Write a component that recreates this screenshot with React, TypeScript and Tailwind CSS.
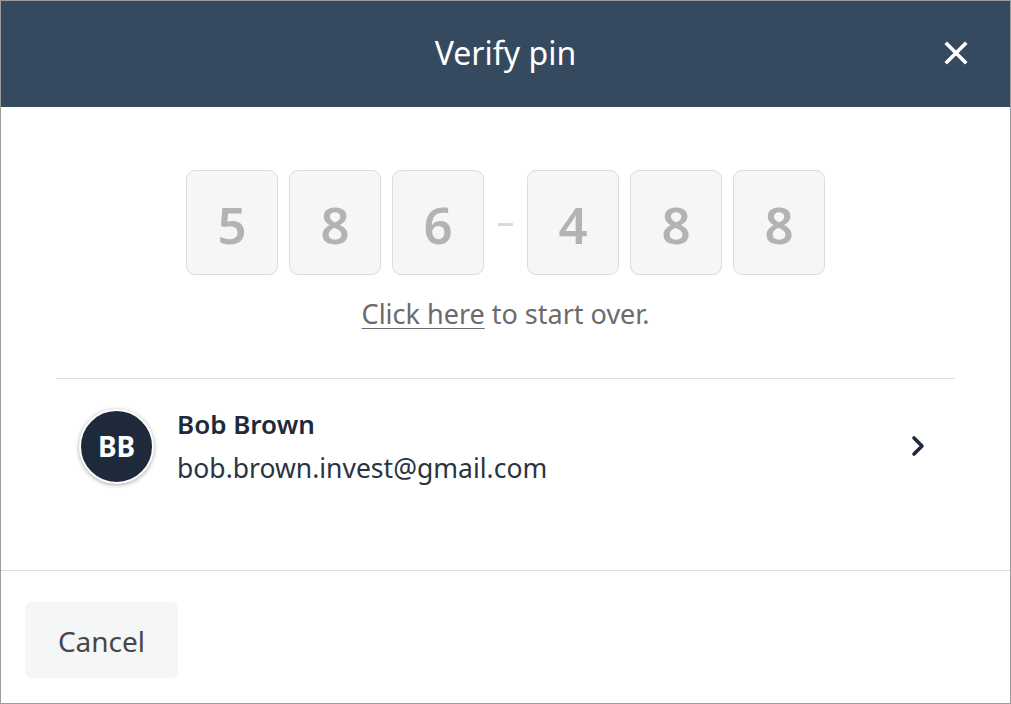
import React from "react";

const digitsA = ["5", "8", "6"];
const digitsB = ["4", "8", "8"];

function Box({ d }: { d: string }) {
  return (
    <div className="w-[92px] h-[105px] rounded-[9px] border border-[#dcdcdc] bg-[#f5f6f8] flex items-center justify-center text-[51px] font-semibold text-[#b3b3b3] leading-none pt-[4px]">
      {d}
    </div>
  );
}

export default function App() {
  return (
    <div
      className="w-[1011px] h-[704px] border border-[#9c9c9c] bg-white flex flex-col overflow-hidden"
      style={{ fontFamily: '"Noto Sans", "Open Sans", sans-serif' }}
    >
      <div className="h-[106px] bg-[#354a5f] flex items-center justify-center relative shrink-0">
        <span className="text-white text-[32px] leading-none mt-[-3px]">Verify pin</span>
        <button className="absolute right-[42px] top-[40px] text-white">
          <svg width="24" height="24" viewBox="0 0 24 24" fill="none" stroke="white" strokeWidth="3.6" strokeLinecap="square">
            <path d="M3 3 L21 21 M21 3 L3 21" />
          </svg>
        </button>
      </div>
      <div className="flex flex-col items-center pt-[63px] shrink-0">
        <div className="flex items-center">
          <div className="flex gap-[11px]">
            {digitsA.map((d, i) => (
              <Box key={i} d={d} />
            ))}
          </div>
          <div className="w-[43px] flex justify-center">
            <div className="w-[15px] h-[3px] bg-[#dadada] mt-[4px]" />
          </div>
          <div className="flex gap-[11px]">
            {digitsB.map((d, i) => (
              <Box key={i} d={d} />
            ))}
          </div>
        </div>
        <div className="mt-[22px] text-[27px] text-[#6b6b6b] leading-[34px]">
          <span className="underline underline-offset-[4px] decoration-[1px]">Click here</span> to start over.
        </div>
      </div>
      <div className="mx-[55px] mt-[47px] border-t border-[#dcdcdc] shrink-0" />
      <div className="flex items-center pl-[78px] pr-[84px] pt-[29px] shrink-0">
        <div className="w-[75px] h-[75px] rounded-full bg-[#1e2a3b] text-white flex items-center justify-center text-[28px] font-bold shadow-[0_1px_4px_rgba(0,0,0,0.35)] border-2 border-white">
          BB
        </div>
        <div className="ml-[23px] flex flex-col flex-1">
          <span className="text-[26px] font-semibold text-[#1e2a3b] leading-[32px]">Bob Brown</span>
          <span className="text-[26.5px] text-[#2a3442] leading-[32px] mt-[12px]">bob.brown.invest@gmail.com</span>
        </div>
        <svg width="16" height="24" viewBox="0 0 16 24" fill="none" stroke="#1e2a3b" strokeWidth="3.6" strokeLinecap="round" strokeLinejoin="round">
          <path d="M4 4 L12 12 L4 20" />
        </svg>
      </div>
      <div className="flex-1" />
      <div className="border-t border-[#dcdcdc] h-[133px] shrink-0 pl-[24px] pt-[31px]">
        <button className="w-[153px] h-[76px] rounded-[7px] bg-[#f5f6f8] text-[28px] text-[#474747] pt-[2px]">
          Cancel
        </button>
      </div>
    </div>
  );
}
